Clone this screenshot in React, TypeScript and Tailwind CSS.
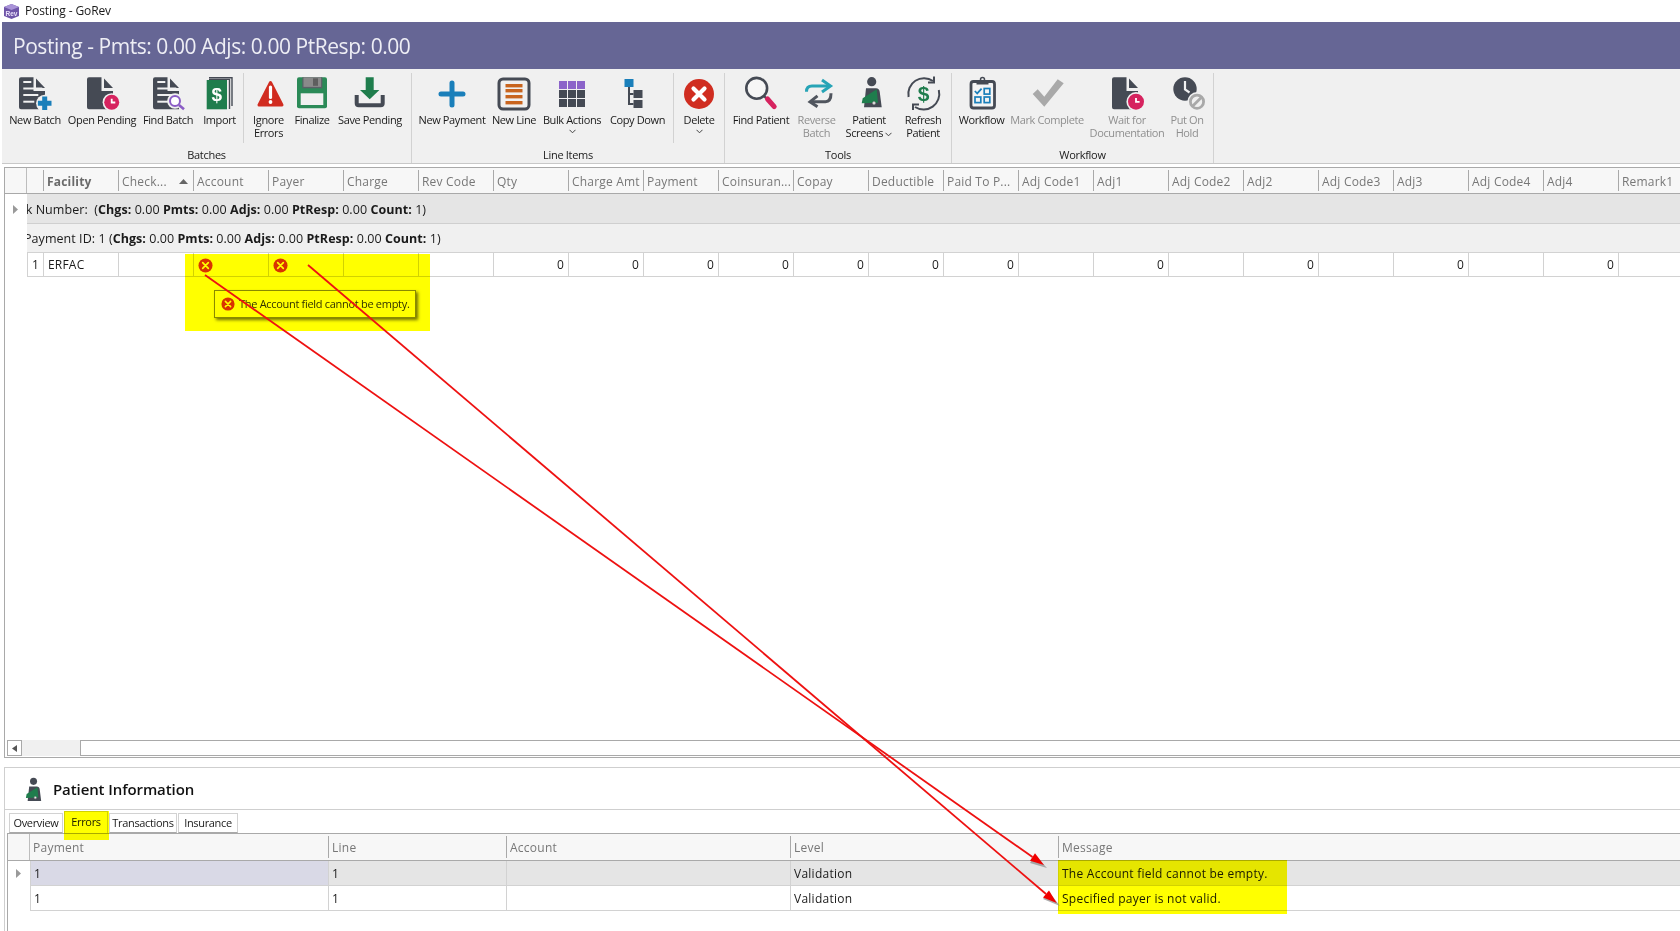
import React from "react";

const dark = "#454a54";
const blue = "#1a7fba";
const crimson = "#d6235f";
const green = "#1f7d4d";
const bg = "#f0f0f0";

const DocBody = ({ x = 2, w = 26 }: { x?: number; w?: number }) => (
  <>
    <path
      d={`M${x + 2} 1.3H${x + 14.5}V15H${x + w}V33.3H${x + 2}a2 2 0 0 1-2-2V3.3a2 2 0 0 1 2-2z`}
      fill={dark}
    />
    <path d={`M${x + 17} 2.5L${x + w} 12H${x + 17}z`} fill={dark} />
  </>
);
const DocLines = ({ x = 2 }: { x?: number }) => (
  <g fill={bg}>
    <rect x={x + 4.3} y="5" width="8" height="2" />
    <rect x={x + 4.3} y="11.5" width="19" height="2" />
    <rect x={x + 4.3} y="18" width="15" height="2" />
    <rect x={x + 4.3} y="24.7" width="11" height="2" />
  </g>
);
const Clock = ({ cx, cy, r = 7.5 }: { cx: number; cy: number; r?: number }) => (
  <>
    <circle cx={cx} cy={cy} r={r + 1.6} fill={bg} />
    <circle cx={cx} cy={cy} r={r} fill={crimson} />
    <path d={`M${cx} ${cy - 3.6}v3.8h3.6`} stroke="#fff" strokeWidth="1.8" fill="none" />
  </>
);

const icons: Record<string, React.ReactNode> = {
  newBatch: (
    <>
      <DocBody />
      <DocLines />
      <circle cx="27.7" cy="27.3" r="8.6" fill={bg} />
      <path d="M27.7 20.5v13.6M20.9 27.3h13.6" stroke={blue} strokeWidth="5" />
    </>
  ),
  openPending: (
    <>
      <DocBody x={3} />
      <Clock cx={27.7} cy={26.3} />
    </>
  ),
  findBatch: (
    <>
      <DocBody x={3} />
      <DocLines x={3} />
      <circle cx="25" cy="25" r="7.8" fill={bg} />
      <circle cx="25" cy="25" r="5" fill="#fff" stroke="#8a5cc5" strokeWidth="2" />
      <path d="M29 29l5 4.3" stroke="#8a5cc5" strokeWidth="2.6" />
    </>
  ),
  import: (
    <>
      <path d="M7 1.7H30V30" fill="none" stroke={dark} strokeWidth="1.4" />
      <path d="M7 3.4H27.5V33" fill="none" stroke={dark} strokeWidth="1.4" />
      <rect x="4.7" y="4" width="20.3" height="29.3" fill={green} />
      <text x="14.8" y="25" fontSize="19" fontWeight="700" fill="#fff" textAnchor="middle" fontFamily="Liberation Sans">$</text>
    </>
  ),
  ignore: (
    <>
      <path d="M19.5 6.5L31 29H8z" fill="#d12c20" stroke="#d12c20" strokeWidth="3" strokeLinejoin="round" />
      <path d="M19.5 11v10.5" stroke="#fff" strokeWidth="3.2" strokeLinecap="round" />
      <circle cx="19.5" cy="26" r="1.9" fill="#fff" />
    </>
  ),
  finalize: (
    <>
      <rect x="3" y="1.3" width="30" height="31" rx="2" fill="#2b8a57" />
      <rect x="8.3" y="1.3" width="20" height="11" fill="#5c6068" />
      <rect x="9.5" y="1.3" width="17.6" height="9.6" fill="#8a8a8a" />
      <rect x="19" y="2.3" width="5" height="7.5" fill="#5e5e5e" />
      <rect x="6.7" y="17.3" width="22.6" height="11.7" fill="#f0f0f0" />
    </>
  ),
  save: (
    <>
      <path d="M4.7 19v8.3a2 2 0 0 0 2 2H28.7a2 2 0 0 0 2-2V19" fill="none" stroke={dark} strokeWidth="4" />
      <path d="M13.7 1.3h8V14h5.7l-9.7 9.3L8 14h5.7z" fill={green} />
    </>
  ),
  newPayment: <path d="M18 7v22M7 18h22" stroke={blue} strokeWidth="5" strokeLinecap="round" />,
  newLine: (
    <>
      <rect x="3" y="3" width="30" height="30" rx="4" fill="#f0f0f0" stroke={dark} strokeWidth="3" />
      <g fill="#c8641e">
        <rect x="9.5" y="8" width="17" height="3.4" />
        <rect x="9.5" y="13" width="17" height="3.4" />
        <rect x="9.5" y="19" width="17" height="3.4" />
        <rect x="9.5" y="25" width="17" height="3.4" />
      </g>
    </>
  ),
  bulk: (
    <>
      <g fill="#8b63c9">
        <rect x="5" y="5" width="8" height="8" />
        <rect x="14" y="5" width="8" height="8" />
        <rect x="23" y="5" width="8" height="8" />
      </g>
      <g fill={dark}>
        <rect x="5" y="14" width="8" height="8" />
        <rect x="14" y="14" width="8" height="8" />
        <rect x="23" y="14" width="8" height="8" />
        <rect x="5" y="23" width="8" height="8" />
        <rect x="14" y="23" width="8" height="8" />
        <rect x="23" y="23" width="8" height="8" />
      </g>
    </>
  ),
  copy: (
    <>
      <rect x="4.5" y="3" width="9" height="8" fill={blue} />
      <path d="M9 11v17H13.5M9 18H13.5" stroke={dark} strokeWidth="2" fill="none" />
      <rect x="13.5" y="14" width="9" height="8" fill={dark} />
      <rect x="13.5" y="24" width="9" height="8" fill={dark} />
    </>
  ),
  delete: (
    <>
      <circle cx="18" cy="18" r="15" fill="#d02d20" />
      <path d="M12.5 12.5l11 11M23.5 12.5l-11 11" stroke="#fff" strokeWidth="4.2" strokeLinecap="round" />
    </>
  ),
  findPatient: (
    <>
      <circle cx="13.7" cy="12.3" r="10.4" fill="#f6f6f6" stroke={dark} strokeWidth="2.6" />
      <path d="M21 20l3 3" stroke={dark} strokeWidth="2.4" />
      <path d="M24.5 23l6.7 7.6" stroke={crimson} strokeWidth="5" strokeLinecap="round" />
    </>
  ),
  reverse: (
    <>
      <path d="M7.5 15.7q0-5.7 5.5-5.7h18" fill="none" stroke="#27a4b6" strokeWidth="3" />
      <path d="M23 4l8.5 6-8.5 6" fill="none" stroke="#27a4b6" strokeWidth="3" />
      <path d="M32 17.3q0 8.4-5.5 8.4H12" fill="none" stroke="#50555e" strokeWidth="3" />
      <path d="M18.5 19.8l-7.5 6 7.5 5" fill="none" stroke="#50555e" strokeWidth="3" />
    </>
  ),
  patient: (
    <>
      <circle cx="20.7" cy="5.7" r="4.6" fill={dark} />
      <path d="M15 12.3h10q3.3 0 3.7 3.5l2 15.5H13z" fill={dark} />
      <path d="M25.7 13.3L27 26.7 10.7 27.3 11.7 22.3z" fill={green} />
      <circle cx="23" cy="27" r="1.5" fill={bg} stroke="#888" strokeWidth="0.7" />
    </>
  ),
  refresh: (
    <>
      <path d="M3.6 21A15.7 15.7 0 0 1 28 5" fill="none" stroke={dark} strokeWidth="2" />
      <path d="M29 .5v6h-6" fill="none" stroke={dark} strokeWidth="2" />
      <path d="M33.8 14A15.7 15.7 0 0 1 10 31" fill="none" stroke={dark} strokeWidth="2" />
      <path d="M8 34v-5.5h6" fill="none" stroke={dark} strokeWidth="2" />
      <text x="18.5" y="25" fontSize="21" fontWeight="700" fill={green} textAnchor="middle" fontFamily="Liberation Sans">$</text>
    </>
  ),
  workflow: (
    <>
      <rect x="7" y="5.5" width="23.5" height="26.5" rx="2.5" fill="#f4f4f4" stroke={dark} strokeWidth="2.8" />
      <rect x="12.5" y="4.5" width="12" height="4" fill={dark} />
      <circle cx="18.5" cy="3.5" r="2" fill="none" stroke={dark} strokeWidth="1.5" />
      <path d="M10.8 15l2.4 2.4 4.4-4.8" fill="none" stroke={blue} strokeWidth="1.7" />
      <rect x="20.2" y="12.5" width="5.6" height="5.6" fill="none" stroke={blue} strokeWidth="1.7" />
      <rect x="11" y="21" width="5.8" height="5.6" fill="none" stroke={blue} strokeWidth="1.7" />
      <rect x="20.2" y="21" width="5.6" height="5.6" fill="none" stroke={blue} strokeWidth="1.7" />
    </>
  ),
  mark: <path d="M3.7 18L15.3 30.7 34.7 7.3 28.7 3.3 15.3 20.7 8.7 13.3z" fill="#a9a9a9" />,
  wait: (
    <>
      <DocBody x={3} />
      <Clock cx={27} cy={25.7} r={8} />
    </>
  ),
  hold: (
    <>
      <circle cx="16" cy="13" r="11.7" fill={dark} />
      <path d="M16 5v8.5l4.5 3" stroke={bg} strokeWidth="2.2" fill="none" />
      <circle cx="28" cy="25.7" r="9.6" fill={bg} />
      <circle cx="28" cy="25.7" r="6.6" fill={bg} stroke="#a9a9a9" strokeWidth="2.8" />
      <path d="M23.5 30.2l9-9" stroke="#a9a9a9" strokeWidth="2.8" />
    </>
  ),
};

const Chevron = () => (
  <svg width="7" height="5" viewBox="0 0 7 5" className="inline-block">
    <path d="M0.5 0.8L3.5 3.8L6.5 0.8" fill="none" stroke="#444" strokeWidth="1" />
  </svg>
);

const Btn = ({
  icon,
  label,
  w,
  off,
  chev,
}: {
  icon: string;
  label: React.ReactNode;
  w: string;
  off?: boolean;
  chev?: boolean;
}) => (
  <div className={`${w} shrink-0 flex flex-col items-center`}>
    <svg width="36" height="36" viewBox="0 0 36 36" className="mt-[3px] shrink-0 overflow-visible">
      {icons[icon]}
    </svg>
    <div
      className={`mt-[1px] text-[11px] leading-[13px] text-center whitespace-nowrap tracking-[-0.38px] ${
        off ? "text-[#8f8f8f]" : "text-[#1a1a1a]"
      }`}
    >
      {label}
    </div>
    {chev && (
      <div className="leading-[6px] h-[6px] mt-[1px]">
        <Chevron />
      </div>
    )}
  </div>
);

const Group = ({ label, w, children }: { label: string; w: string; children: React.ReactNode }) => (
  <div className={`${w} shrink-0 h-[90px] border-r border-[#d2d2d2] flex flex-col`}>
    <div className="flex h-[76px]">{children}</div>
    <div className="flex-1 flex items-center justify-center text-[11px] text-[#1a1a1a] tracking-[-0.3px]">{label}</div>
  </div>
);
const ShortSep = ({ m }: { m: string }) => <div className={`w-px h-[70px] bg-[#d2d2d2] shrink-0 ${m}`} />;

const cols = [
  "Facility", "Check...", "Account", "Payer", "Charge", "Rev Code", "Qty", "Charge Amt", "Payment",
  "Coinsuran...", "Copay", "Deductible", "Paid To P...", "Adj Code1", "Adj1", "Adj Code2", "Adj2",
  "Adj Code3", "Adj3", "Adj Code4", "Adj4", "Remark1",
];
const cells: (string | null)[] = [
  "ERFAC", "", "err", "err", "", "", "0", "0", "0", "0", "0", "0", "0", "", "0", "", "0", "", "0", "", "0", "",
];

const ErrIcon = ({ s = 15 }: { s?: number }) => (
  <svg width={s} height={s} viewBox="0 0 16 16" className="shrink-0">
    <circle cx="8" cy="8" r="7.5" fill="#d9341c" />
    <path d="M5 5l6 6M11 5l-6 6" stroke="#fff" strokeWidth="1.8" strokeLinecap="round" />
  </svg>
);

const Triangle = ({ c = "#9a9a9a" }: { c?: string }) => (
  <svg width="5" height="9" viewBox="0 0 5 9">
    <path d="M0 0l5 4.5L0 9z" fill={c} />
  </svg>
);

const GroupStats = () => (
  <>
    (<b>Chgs:</b> 0.00 <b>Pmts:</b> 0.00 <b>Adjs:</b> 0.00 <b>PtResp:</b> 0.00 <b>Count:</b> 1)
  </>
);

const bottomCols = [
  { t: "Payment", w: "w-[298px]" },
  { t: "Line", w: "w-[178px]" },
  { t: "Account", w: "w-[284px]" },
  { t: "Level", w: "w-[268px]" },
  { t: "Message", w: "flex-1" },
];
const bottomRows = [
  ["1", "1", "", "Validation", "The Account field cannot be empty."],
  ["1", "1", "", "Validation", "Specified payer is not valid."],
];

export default function App() {
  return (
    <div
      className="relative w-[1680px] h-[931px] overflow-hidden bg-white flex flex-col text-[#1a1a1a]"
      style={{ fontFamily: '"Open Sans", sans-serif' }}
    >
      {/* window title */}
      <div className="h-[22px] shrink-0 flex items-center pl-[3px] gap-[5px]">
        <svg width="17" height="15" viewBox="0 0 17 15">
          <path d="M1 3l7.5-3L16 3v9l-7.5 3L1 12z" fill="#6f55a8" />
          <path d="M1 3l7.5-3L16 3 8.5 6z" fill="#a993d8" />
          <text x="8.5" y="11.5" fontSize="6.5" fontWeight="700" fill="#e8e0f8" textAnchor="middle" fontFamily="Liberation Sans">Rev</text>
        </svg>
        <span className="text-[12px] tracking-[-0.1px]">Posting - GoRev</span>
      </div>
      {/* banner */}
      <div className="h-[47px] shrink-0 ml-[2px] bg-[#666695] flex items-center pl-[11px] pt-[3px]">
        <span className="text-[21px] text-[#eeeef5] tracking-[-0.45px]">Posting - Pmts: 0.00 Adjs: 0.00 PtResp: 0.00</span>
      </div>
      {/* ribbon */}
      <div className="h-[95px] shrink-0 ml-[2px] bg-[#f0f0f0] border-b border-[#c8c8c8] flex items-start pt-[4px]">
        <Group label="Batches" w="w-[410px]">
          <div className="w-[2px]" />
          <Btn icon="newBatch" label="New Batch" w="w-[62px]" />
          <Btn icon="openPending" label="Open Pending" w="w-[72px]" />
          <Btn icon="findBatch" label="Find Batch" w="w-[60px]" />
          <Btn icon="import" label="Import" w="w-[43px]" />
          <ShortSep m="mx-[2px]" />
          <Btn icon="ignore" label={<>Ignore<br />Errors</>} w="w-[45px]" />
          <Btn icon="finalize" label="Finalize" w="w-[42px]" />
          <Btn icon="save" label="Save Pending" w="w-[74px]" />
        </Group>
        <Group label="Line Items" w="w-[313px]">
          <div className="w-[2px]" />
          <Btn icon="newPayment" label="New Payment" w="w-[76px]" />
          <Btn icon="newLine" label="New Line" w="w-[48px]" />
          <Btn icon="bulk" label="Bulk Actions" w="w-[68px]" chev />
          <Btn icon="copy" label="Copy Down" w="w-[63px]" />
          <ShortSep m="ml-[4px] mr-[3px]" />
          <Btn icon="delete" label="Delete" w="w-[44px]" chev />
        </Group>
        <Group label="Tools" w="w-[227px]">
          <div className="w-[2px]" />
          <Btn icon="findPatient" label="Find Patient" w="w-[68px]" />
          <Btn icon="reverse" label={<>Reverse<br />Batch</>} w="w-[43px]" off />
          <Btn icon="patient" label={<>Patient<br />Screens <Chevron /></>} w="w-[62px]" />
          <Btn icon="refresh" label={<>Refresh<br />Patient</>} w="w-[46px]" />
        </Group>
        <Group label="Workflow" w="w-[262px]">
          <div className="w-[2px]" />
          <Btn icon="workflow" label="Workflow" w="w-[55px]" />
          <Btn icon="mark" label="Mark Complete" w="w-[76px]" off />
          <Btn icon="wait" label={<>Wait for<br />Documentation</>} w="w-[84px]" off />
          <Btn icon="hold" label={<>Put On<br />Hold</>} w="w-[36px]" off />
        </Group>
      </div>
      <div className="h-[3px] shrink-0" />
      {/* main grid */}
      <div className="h-[591px] shrink-0 ml-[4px] border-l border-t border-b border-[#a9a9a9] flex flex-col text-[12px] tracking-[0.2px]">
        <div className="h-[26px] shrink-0 bg-[#f7f7f7] border-b border-[#a9a9a9] flex overflow-hidden text-[#777]">
          <div className="w-[22px] shrink-0 border-r border-[#bdbdbd]" />
          <div className="w-[16px] shrink-0" />
          {cols.map((c, i) => (
            <div key={c} className="w-[75px] shrink-0 my-[2px] border-l border-[#a9a9a9] pl-[3px] pt-[2px] flex items-center justify-between pr-[4px]">
              <span className={`whitespace-nowrap ${i === 0 ? "font-bold text-[#6a6a6a]" : ""}`}>{c}</span>
              {i === 1 && (
                <svg width="9" height="5" viewBox="0 0 9 5" className="mr-[1px]">
                  <path d="M0 5l4.5-5L9 5z" fill="#666" />
                </svg>
              )}
            </div>
          ))}
        </div>
        <div className="h-[30px] shrink-0 flex">
          <div className="w-[22px] shrink-0 flex items-center justify-center pr-[2px]"><Triangle /></div>
          <div className="flex-1 bg-[#e5e5e5] border-b border-[#cfcfcf] overflow-hidden flex items-center whitespace-pre pt-[3px] text-[12.5px] tracking-[0.05px]">
            <span className="ml-[-30px]">Check Number:  <GroupStats /></span>
          </div>
        </div>
        <div className="h-[29px] shrink-0 flex">
          <div className="w-[22px] shrink-0" />
          <div className="flex-1 bg-[#f0f0f0] border-b border-[#d2d2d2] overflow-hidden flex items-center whitespace-pre pt-[3px] text-[12.5px] tracking-[0.05px]">
            <span className="ml-[-3px]">Payment ID: 1 <GroupStats /></span>
          </div>
        </div>
        <div className="h-[24px] shrink-0 flex overflow-hidden">
          <div className="w-[22px] shrink-0" />
          <div className="w-[16px] shrink-0 border-l border-b border-[#d2d2d2] flex items-center justify-end pr-[4px] pt-[1px]">1</div>
          {cells.map((c, i) => (
            <div
              key={i}
              className={`w-[75px] shrink-0 border-l border-b border-[#d2d2d2] flex items-center px-[4px] pt-[1px] ${
                c === "0" ? "justify-end" : ""
              }`}
            >
              {c === "err" ? <ErrIcon /> : c}
            </div>
          ))}
        </div>
        <div className="flex-1" />
        <div className="h-[16px] shrink-0 flex ml-[2px] mb-[1px]">
          <div className="w-[15px] shrink-0 border border-[#a9a9a9] flex items-center justify-center">
            <svg width="5" height="7" viewBox="0 0 5 7"><path d="M5 0L0 3.5 5 7z" fill="#555" /></svg>
          </div>
          <div className="w-[58px] shrink-0 bg-[#f0f0f0]" />
          <div className="flex-1 border border-r-0 border-[#a9a9a9] bg-white" />
        </div>
      </div>
      <div className="h-[9px] shrink-0" />
      {/* patient information */}
      <div className="flex-1 ml-[4px] border-l border-t border-[#cfcfcf] flex flex-col">
        <div className="h-[42px] shrink-0 border-b border-[#cfcfcf] flex items-center pl-[18px] gap-[10px] pt-[2px]">
          <svg width="20" height="26" viewBox="8 0 24 34">{icons.patient}</svg>
          <span className="text-[15px] font-semibold text-[#111] tracking-[-0.1px]">Patient Information</span>
        </div>
        <div className="h-[23px] shrink-0 flex items-end pl-[4px] gap-[1px] text-[11px] tracking-[-0.33px]">
          {[
            ["Overview", "w-[54px]"],
            ["Errors", "w-[44px]"],
            ["Transactions", "w-[68px]"],
            ["Insurance", "w-[60px]"],
          ].map(([t, w]) => (
            <div
              key={t}
              className={`${w} border border-[#d2d2d2] flex items-center justify-center ${
                t === "Errors" ? "h-[22px] border-b-0" : "h-[20px] pt-[1px] border-b-[#a9a9a9]"
              }`}
            >
              {t}
            </div>
          ))}
        </div>
        <div className="flex-1 ml-[2px] border-l border-t border-[#a9a9a9] flex flex-col text-[12px] tracking-[0.25px]">
          <div className="h-[27px] shrink-0 bg-[#f7f7f7] border-b border-[#a9a9a9] flex text-[#777]">
            <div className="w-[22px] shrink-0 border-r border-[#bdbdbd]" />
            {bottomCols.map((c, i) => (
              <div key={c.t} className={`${c.w} shrink-0 my-[2px] pl-[3px] pt-[1px] flex items-center ${i > 0 ? "border-l border-[#a9a9a9]" : ""}`}>
                {c.t}
              </div>
            ))}
          </div>
          {bottomRows.map((r, ri) => (
            <div key={ri} className="h-[25px] shrink-0 flex">
              <div className="w-[22px] shrink-0 flex items-center justify-center pr-[2px]">{ri === 0 && <Triangle />}</div>
              {r.map((v, i) => (
                <div
                  key={i}
                  className={`${bottomCols[i].w} shrink-0 border-b border-l border-[#d2d2d2] px-[3px] pt-[1px] flex items-center ${
                    ri === 0 ? (i === 0 ? "bg-[#d9d9e6]" : "bg-[#e5e5e5]") : "bg-white"
                  }`}
                >
                  {v}
                </div>
              ))}
            </div>
          ))}
        </div>
      </div>

      {/* tooltip over the cell */}
      <div className="absolute left-[214px] top-[290px] w-[202px] h-[28px] bg-white border border-[#8a8a8a] shadow-[2px_2px_3px_rgba(0,0,0,0.55)] flex items-center pl-[6px] gap-[4px] text-[11px] tracking-[-0.3px] text-[#333]">
        <ErrIcon s={14} />
        <span>The Account field cannot be empty.</span>
      </div>

      {/* yellow highlighter marks */}
      <div className="absolute left-[185px] top-[254px] w-[245px] h-[77px] bg-[#ffff00] mix-blend-multiply" />
      <div className="absolute left-[64px] top-[811px] w-[45px] h-[29px] bg-[#ffff00] mix-blend-multiply" />
      <div className="absolute left-[1058px] top-[860px] w-[229px] h-[54px] bg-[#ffff00] mix-blend-multiply" />

      {/* red arrows */}
      <svg className="absolute inset-0 pointer-events-none" width="1680" height="931" viewBox="0 0 1680 931">
        <polygon points="1047,868 1035,855 1030,863" fill="#8a8a8a" opacity="0.7" />
        <polygon points="1060,906 1049,892 1043,899" fill="#8a8a8a" opacity="0.7" />
        <line x1="205" y1="275" x2="1032.5" y2="857" stroke="#ee1111" strokeWidth="1.8" />
        <line x1="308" y1="265" x2="1046" y2="894" stroke="#ee1111" strokeWidth="1.8" />
        <polygon points="1044,865 1035,853.3 1030,860.7" fill="#f00000" />
        <polygon points="1056.7,903 1049,890.5 1043,897.5" fill="#f00000" />
      </svg>
    </div>
  );
}
